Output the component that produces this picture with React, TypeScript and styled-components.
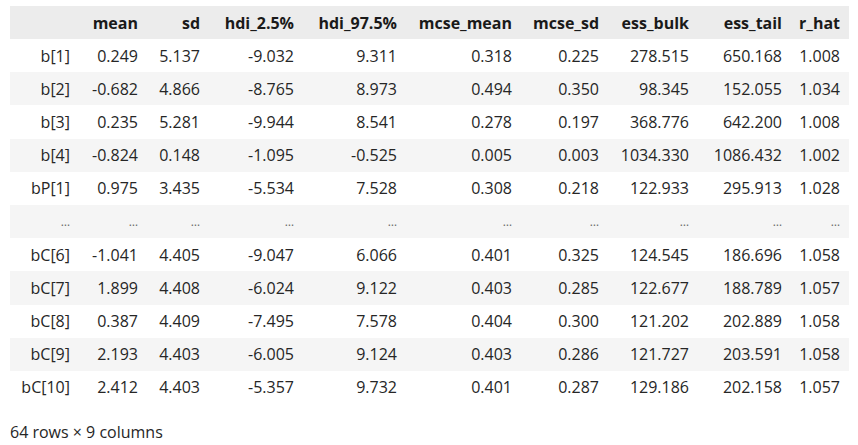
import React from "react"
import styled, { createGlobalStyle } from "styled-components"

const GlobalStyle = createGlobalStyle`
  html, body {
    margin: 0;
    padding: 0;
    background: #ffffff;
  }
  body {
    font-family: "Open Sans", "Noto Sans", sans-serif;
    color: #1f1f1f;
  }
`

const columns = [
  { key: "", width: 69 },
  { key: "mean", width: 68 },
  { key: "sd", width: 62 },
  { key: "hdi_2.5%", width: 94 },
  { key: "hdi_97.5%", width: 103 },
  { key: "mcse_mean", width: 115 },
  { key: "mcse_sd", width: 87 },
  { key: "ess_bulk", width: 90 },
  { key: "ess_tail", width: 93 },
  { key: "r_hat", width: 58 }
]

const rows: string[][] = [
  ["b[1]", "0.249", "5.137", "-9.032", "9.311", "0.318", "0.225", "278.515", "650.168", "1.008"],
  ["b[2]", "-0.682", "4.866", "-8.765", "8.973", "0.494", "0.350", "98.345", "152.055", "1.034"],
  ["b[3]", "0.235", "5.281", "-9.944", "8.541", "0.278", "0.197", "368.776", "642.200", "1.008"],
  ["b[4]", "-0.824", "0.148", "-1.095", "-0.525", "0.005", "0.003", "1034.330", "1086.432", "1.002"],
  ["bP[1]", "0.975", "3.435", "-5.534", "7.528", "0.308", "0.218", "122.933", "295.913", "1.028"],
  ["...", "...", "...", "...", "...", "...", "...", "...", "...", "..."],
  ["bC[6]", "-1.041", "4.405", "-9.047", "6.066", "0.401", "0.325", "124.545", "186.696", "1.058"],
  ["bC[7]", "1.899", "4.408", "-6.024", "9.122", "0.403", "0.285", "122.677", "188.789", "1.057"],
  ["bC[8]", "0.387", "4.409", "-7.495", "7.578", "0.404", "0.300", "121.202", "202.889", "1.058"],
  ["bC[9]", "2.193", "4.403", "-6.005", "9.124", "0.403", "0.286", "121.727", "203.591", "1.058"],
  ["bC[10]", "2.412", "4.403", "-5.357", "9.732", "0.401", "0.287", "129.186", "202.158", "1.057"]
]

export default function App() {
  return (
    <>
      <GlobalStyle />
      <Output>
        <Table>
          <colgroup>
            {columns.map((c, i) => (
              <col key={i} style={{ width: c.width }} />
            ))}
          </colgroup>
          <thead>
            <HeadRow>
              {columns.map((c, i) => (
                <HeadCell key={i}>{c.key}</HeadCell>
              ))}
            </HeadRow>
          </thead>
          <tbody>
            {rows.map((r, i) => (
              <BodyRow key={i} $striped={i % 2 === 1}>
                {r.map((v, j) => (
                  <Cell key={j} $ellipsis={v === "..."}>
                    {v === "..." ? "…" : v}
                  </Cell>
                ))}
              </BodyRow>
            ))}
          </tbody>
        </Table>
        <Footer>64 rows × 9 columns</Footer>
      </Output>
    </>
  )
}

// Styled
const Output = styled.div`
  padding: 6px 9px 0 10px;
`

const Table = styled.table`
  border-collapse: collapse;
  border-spacing: 0;
  table-layout: fixed;
  width: 839px;
  font-size: 16px;
`

const HeadRow = styled.tr`
  background: #ececec;
  height: 33px;
`

const HeadCell = styled.th`
  text-align: right;
  font-weight: 700;
  padding: 0 9px 0 0;
  white-space: nowrap;
  color: #1a1a1a;
`

const BodyRow = styled.tr<{ $striped: boolean }>`
  background: ${(p) => (p.$striped ? "#f5f5f5" : "#ffffff")};
  height: 33.2px;
`

const Cell = styled.td<{ $ellipsis: boolean }>`
  text-align: right;
  padding: 0 9px 0 0;
  white-space: nowrap;
  color: ${(p) => (p.$ellipsis ? "#6a6a6a" : "#262626")};
  font-size: ${(p) => (p.$ellipsis ? "12px" : "inherit")};
`

const Footer = styled.div`
  margin-top: 17px;
  font-size: 16px;
  color: #262626;
`
